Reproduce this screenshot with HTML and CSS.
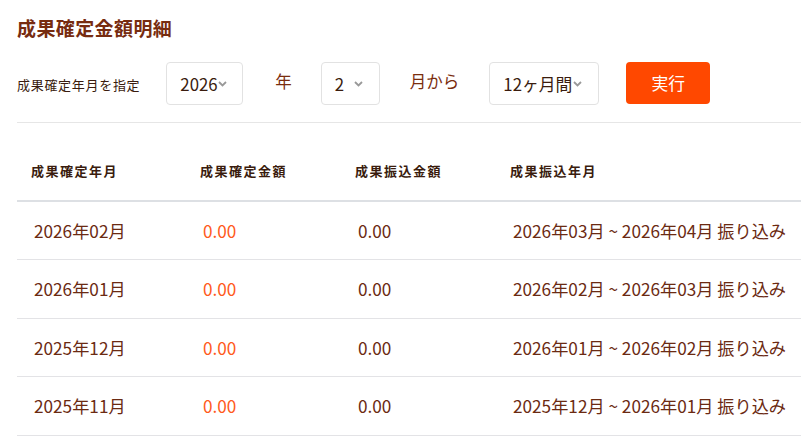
FILE: index.html
```html
<!DOCTYPE html>
<html lang="ja">
<head>
<meta charset="utf-8">
<link rel="stylesheet" href="styles.css">
</head>
<body>
<div class="page">
  <h1 class="title">成果確定金額明細</h1>
  <div class="filter">
    <span class="filter-label">成果確定年月を指定</span>
    <div class="select sel-year"><span>2026</span><svg class="chev" width="9" height="6" viewBox="0 0 9 6"><path d="M1 1l3.5 3.5L8 1" fill="none" stroke="#999" stroke-width="1.8"/></svg></div>
    <span class="unit unit-year">年</span>
    <div class="select sel-month"><span>2</span><svg class="chev" width="9" height="6" viewBox="0 0 9 6"><path d="M1 1l3.5 3.5L8 1" fill="none" stroke="#999" stroke-width="1.8"/></svg></div>
    <span class="unit unit-from">月から</span>
    <div class="select sel-period"><span>12ヶ月間</span><svg class="chev" width="9" height="6" viewBox="0 0 9 6"><path d="M1 1l3.5 3.5L8 1" fill="none" stroke="#999" stroke-width="1.8"/></svg></div>
    <button class="run">実行</button>
  </div>
  <table class="list">
    <thead>
      <tr><th class="c1">成果確定年月</th><th class="c2">成果確定金額</th><th class="c3">成果振込金額</th><th class="c4">成果振込年月</th></tr>
    </thead>
    <tbody>
      <tr><td>2026年02月</td><td class="amt">0.00</td><td>0.00</td><td>2026年03月 ~ 2026年04月 振り込み</td></tr>
      <tr><td>2026年01月</td><td class="amt">0.00</td><td>0.00</td><td>2026年02月 ~ 2026年03月 振り込み</td></tr>
      <tr><td>2025年12月</td><td class="amt">0.00</td><td>0.00</td><td>2026年01月 ~ 2026年02月 振り込み</td></tr>
      <tr><td>2025年11月</td><td class="amt">0.00</td><td>0.00</td><td>2025年12月 ~ 2026年01月 振り込み</td></tr>
    </tbody>
  </table>
</div>
</body>
</html>
```
FILE: styles.css
```css
* { box-sizing: border-box; }
html, body { margin: 0; padding: 0; background: #fff; }
body {
  font-family: "Noto Sans CJK JP", "Noto Sans", sans-serif;
  color: #6b2a12;
  overflow: hidden;
}
.page { padding-left: 17px; }
.title {
  margin: 0;
  padding-top: 14px;
  height: 62px;
  font-size: 19px;
  font-weight: 700;
  line-height: 28px;
  color: #772c10;
  letter-spacing: 0.4px;
}
.filter {
  display: flex;
  align-items: center;
  height: 61px;
  padding-bottom: 18px;
  border-bottom: 1px solid #e6e6e6;
}
.filter-label {
  font-size: 13px;
  letter-spacing: 0.7px;
  color: #3a1c0e;
  margin-right: 26px;
  margin-top: 2px;
}
.select {
  height: 43px;
  border: 1px solid #e2e2e2;
  border-radius: 4px;
  display: flex;
  align-items: center;
  justify-content: space-between;
  padding: 0 16px 0 13px;
  font-size: 16.8px;
  color: #3a1c0e;
}
.select span { line-height: 1; margin-top: 2px; }
.chev { margin-top: 2px; flex: none; }
.sel-year { width: 77px; }
.sel-month { width: 59px; }
.sel-period { width: 110px; }
.unit { font-size: 16.5px; color: #7a2d0e; }
.unit-year { margin: -4px 29px 0 32px; }
.unit-from { margin: -4px 30px 0 30px; }
.run {
  margin-left: 27px;
  width: 84px;
  height: 42px;
  border: 0;
  border-radius: 4px;
  background: #ff4800;
  color: #fff;
  font-family: inherit;
  font-size: 16.8px;
  padding: 0;
  margin-top: -1px;
}
.list {
  width: 784px;
  border-collapse: collapse;
}
.list th {
  text-align: left;
  font-size: 13px;
  font-weight: 700;
  letter-spacing: 1.5px;
  color: #3a1c0e;
  height: 78px;
  padding: 18px 0 0 14px;
  border-bottom: 2px solid #dde0e4;
}
.list th.c1 { width: 169px; }
.list th.c2 { width: 155px; }
.list th.c3 { width: 155px; }
.list td {
  height: 58.5px;
  padding: 0 0 0 17px;
  font-size: 17.2px;
  color: #6b2a12;
  border-bottom: 1px solid #e3e3e6;
  white-space: nowrap;
}
.list td.amt { color: #ff5a1c; }
```
